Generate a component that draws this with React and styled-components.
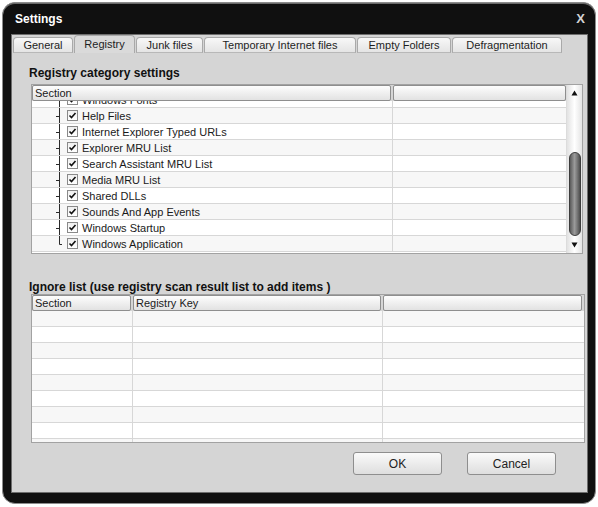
import styled, { createGlobalStyle } from 'styled-components';

const GlobalStyle = createGlobalStyle`
  body {
    margin: 0;
    background: #ffffff;
    font-family: 'Liberation Sans', Arial, sans-serif;
  }
`;

const Window = styled.div`
  margin: 2px 0 0 2px;
  width: 594px;
  height: 502px;
  box-sizing: border-box;
  border: 1px solid #8c8c8c;
  border-radius: 13px;
  background: #101010;
  box-shadow: inset 0 1px 0 #6a6a6a;
  padding: 0 7px 10px 8px;
  display: flex;
  flex-direction: column;
`;

const TitleBar = styled.div`
  height: 31px;
  flex-shrink: 0;
  display: flex;
  align-items: center;
  justify-content: space-between;
  padding: 0 3px 0 4px;
  div.caption {
    color: #ffffff;
    font-size: 12px;
    font-weight: 700;
  }
  div.close {
    color: #d4d4d4;
    font-size: 13px;
    font-weight: 700;
    cursor: pointer;
  }
`;

const Panel = styled.div`
  flex: 1;
  display: flex;
  flex-direction: column;
  background: #d5d5d5;
  border: 1px solid #6e6e6e;
`;

const TabStrip = styled.div`
  height: 18px;
  display: flex;
  align-items: flex-end;
  gap: 1px;
  padding: 0 0 0 1px;
`;

const Tab = styled.div`
  width: ${(p) => p.$w}px;
  height: ${(p) => (p.$active ? 18 : 16)}px;
  box-sizing: border-box;
  display: flex;
  align-items: center;
  justify-content: center;
  font-size: 11px;
  color: #1e1e1e;
  border: 1px solid #a9a9a9;
  border-bottom: ${(p) => (p.$active ? 'none' : '1px solid #b8b8b8')};
  border-radius: 4px 4px 0 0;
  background: ${(p) => (p.$active ? '#dadada' : 'linear-gradient(#f8f8f8, #e4e4e4)')};
  padding-bottom: ${(p) => (p.$active ? 2 : 0)}px;
  cursor: default;
`;

const Content = styled.div`
  flex: 1;
  display: flex;
  flex-direction: column;
  padding: 13px 2px 0 17px;
`;

const SectionTitle = styled.div`
  font-size: 12px;
  line-height: 14px;
  font-weight: 700;
  color: #111;
  margin-top: ${(p) => p.$top || 0}px;
`;

const TableFrame = styled.div`
  margin: ${(p) => p.$mt}px ${(p) => p.$mr}px 0 2px;
  border: 1px solid #a2a2a2;
  background: #ffffff;
  display: flex;
`;

const TableMain = styled.div`
  flex: 1;
  display: flex;
  flex-direction: column;
  min-width: 0;
`;

const HeaderRow = styled.div`
  height: 16px;
  display: flex;
  gap: 2px;
  padding-right: ${(p) => p.$pr || 0}px;
  background: #d5d5d5;
`;

const HeaderCell = styled.div`
  width: ${(p) => (p.$w ? `${p.$w}px` : 'auto')};
  flex: ${(p) => (p.$w ? 'none' : 1)};
  box-sizing: border-box;
  border: 1px solid #8e8e8e;
  border-radius: 2px;
  background: linear-gradient(#fdfdfd, #e2e2e2);
  font-size: 11px;
  line-height: 14px;
  color: #1a1a1a;
  padding-left: 2px;
  white-space: nowrap;
  overflow: hidden;
`;

const Body = styled.div`
  height: ${(p) => p.$h}px;
  overflow: hidden;
`;

const Row = styled.div`
  height: 16px;
  box-sizing: border-box;
  display: flex;
  border-bottom: 1px solid #d7d7d7;
  background: ${(p) => (p.$alt ? '#f7f7f7' : '#ffffff')};
  &:first-child {
    margin-top: ${(p) => p.$offset || 0}px;
  }
`;

const Cell = styled.div`
  width: ${(p) => (p.$w ? `${p.$w}px` : 'auto')};
  flex: ${(p) => (p.$w ? 'none' : 1)};
  box-sizing: border-box;
  border-right: ${(p) => (p.$w ? '1px solid #d7d7d7' : 'none')};
  display: flex;
  align-items: center;
  font-size: 11px;
  color: #1a1a1a;
  white-space: nowrap;
  overflow: hidden;
`;

const TreeItem = styled.div`
  display: flex;
  align-items: center;
  height: 100%;
  padding-left: 21px;
  svg.branch {
    flex-shrink: 0;
  }
  span.label {
    margin-left: 4px;
  }
`;

const CheckBox = styled.div`
  width: 11px;
  height: 11px;
  box-sizing: border-box;
  margin-left: 5px;
  border: 1px solid #8a8a8a;
  background: linear-gradient(#f0f0f0, #ffffff);
  display: flex;
  align-items: center;
  justify-content: center;
`;

const ScrollBar = styled.div`
  width: 15px;
  display: flex;
  flex-direction: column;
  background: linear-gradient(90deg, #e2e2e2, #ffffff 50%, #e4e4e4);
  border-left: 1px solid #dcdcdc;
`;

const ScrollArrow = styled.div`
  height: 16px;
  display: flex;
  align-items: center;
  justify-content: center;
`;

const ScrollTrack = styled.div`
  flex: 1;
  display: flex;
  flex-direction: column;
  align-items: center;
`;

const Thumb = styled.div`
  margin-top: ${(p) => p.$top}px;
  width: 12px;
  height: ${(p) => p.$h}px;
  box-sizing: border-box;
  border: 1px solid #3c3c3c;
  border-radius: 6px;
  background: linear-gradient(90deg, #5a5a5a, #9a9a9a 45%, #7a7a7a 70%, #4e4e4e);
`;

const ButtonRow = styled.div`
  display: flex;
  justify-content: flex-end;
  gap: 25px;
  margin-top: 9px;
  padding-right: 29px;
`;

const Button = styled.button`
  width: 89px;
  height: 23px;
  margin: 0;
  border: 1px solid #8e8e8e;
  border-radius: 3px;
  background: linear-gradient(#fafafa, #dedede);
  font-family: 'Liberation Sans', Arial, sans-serif;
  font-size: 12px;
  color: #222;
  cursor: pointer;
`;

const tabs = [
  { label: 'General', w: 60 },
  { label: 'Registry', w: 61, active: true },
  { label: 'Junk files', w: 67 },
  { label: 'Temporary Internet files', w: 152 },
  { label: 'Empty Folders', w: 94 },
  { label: 'Defragmentation', w: 110 },
];

const categories = [
  'Windows Fonts',
  'Help Files',
  'Internet Explorer Typed URLs',
  'Explorer MRU List',
  'Search Assistant MRU List',
  'Media MRU List',
  'Shared DLLs',
  'Sounds And App Events',
  'Windows Startup',
  'Windows Application',
];

const Branch = ({ last }) => (
  <svg className='branch' width='9' height='16' viewBox='0 0 9 16'>
    {last ? (
      <path d='M6.5 0 V8.5 H9' stroke='#2a2a2a' strokeWidth='1' fill='none' />
    ) : (
      <path d='M6.5 0 V16 M3 8.5 H6.5' stroke='#2a2a2a' strokeWidth='1' fill='none' />
    )}
  </svg>
);

const Check = () => (
  <svg width='9' height='9' viewBox='0 0 9 9'>
    <path d='M1.5 4.5 L3.5 6.5 L7.5 2' stroke='#111' strokeWidth='1.6' fill='none' />
  </svg>
);

const App = () => {
  return (
    <>
      <GlobalStyle />
      <Window>
        <TitleBar>
          <div className='caption'>Settings</div>
          <div className='close'>X</div>
        </TitleBar>
        <Panel>
          <TabStrip>
            {tabs.map((t) => (
              <Tab key={t.label} $w={t.w} $active={t.active}>
                {t.label}
              </Tab>
            ))}
          </TabStrip>
          <Content>
            <SectionTitle>Registry category settings</SectionTitle>
            <TableFrame $mt={4} $mr={2}>
              <TableMain>
                <HeaderRow>
                  <HeaderCell $w={359}>Section</HeaderCell>
                  <HeaderCell />
                </HeaderRow>
                <Body $h={152}>
                  {categories.map((name, i) => (
                    <Row key={name} $alt={i % 2 === 1} $offset={-9}>
                      <Cell $w={361}>
                        <TreeItem>
                          <Branch last={i === categories.length - 1} />
                          <CheckBox>
                            <Check />
                          </CheckBox>
                          <span className='label'>{name}</span>
                        </TreeItem>
                      </Cell>
                      <Cell />
                    </Row>
                  ))}
                </Body>
              </TableMain>
              <ScrollBar>
                <ScrollArrow>
                  <svg width='7' height='6' viewBox='0 0 7 6'>
                    <path d='M3.5 0.5 L6.5 5.5 H0.5 Z' fill='#111' />
                  </svg>
                </ScrollArrow>
                <ScrollTrack>
                  <Thumb $top={51} $h={84} />
                </ScrollTrack>
                <ScrollArrow>
                  <svg width='7' height='6' viewBox='0 0 7 6'>
                    <path d='M0.5 0.5 H6.5 L3.5 5.5 Z' fill='#111' />
                  </svg>
                </ScrollArrow>
              </ScrollBar>
            </TableFrame>

            <SectionTitle $top={26}>Ignore list (use registry scan result list to add items )</SectionTitle>
            <TableFrame $mt={0} $mr={0}>
              <TableMain>
                <HeaderRow $pr={2}>
                  <HeaderCell $w={99}>Section</HeaderCell>
                  <HeaderCell $w={248}>Registry Key</HeaderCell>
                  <HeaderCell />
                </HeaderRow>
                <Body $h={131}>
                  {Array.from({ length: 9 }).map((_, i) => (
                    <Row key={i} $alt={i % 2 === 0}>
                      <Cell $w={101} />
                      <Cell $w={250} />
                      <Cell />
                    </Row>
                  ))}
                </Body>
              </TableMain>
            </TableFrame>

            <ButtonRow>
              <Button>OK</Button>
              <Button>Cancel</Button>
            </ButtonRow>
          </Content>
        </Panel>
      </Window>
    </>
  );
};

export default App;
